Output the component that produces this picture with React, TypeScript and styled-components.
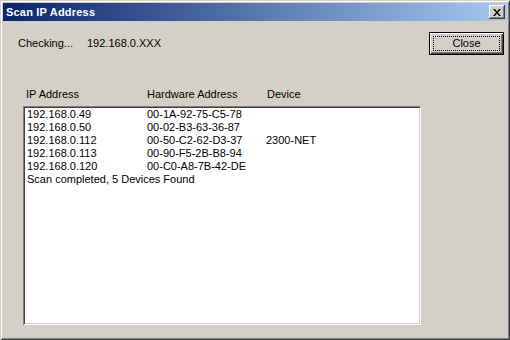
import * as React from "react";
import styled, { createGlobalStyle } from "styled-components";

const Global = createGlobalStyle`
	html, body {
		margin: 0;
		padding: 0;
		background: #d4d0c8;
	}
	body {
		font-family: "Liberation Sans", Arial, sans-serif;
		font-size: 11px;
		color: #000;
	}
`;

const Window = styled.div`
	width: 510px;
	height: 340px;
	box-sizing: border-box;
	padding: 3px;
	background: #d4d0c8;
	display: flex;
	flex-direction: column;
	box-shadow: inset 1px 1px #d4d0c8, inset -1px -1px #404040,
		inset 2px 2px #fff, inset -2px -2px #808080;
`;

const TitleBar = styled.div`
	height: 18px;
	display: flex;
	align-items: center;
	justify-content: space-between;
	padding: 0 2px 0 3px;
	background: linear-gradient(to right, #0a246a, #a6caf0);
	color: #fff;
	font-weight: bold;
	font-size: 11px;
	letter-spacing: 0.2px;
	flex-shrink: 0;
`;

const CaptionButton = styled.div`
	width: 16px;
	height: 14px;
	box-sizing: border-box;
	background: #d4d0c8;
	display: flex;
	align-items: center;
	justify-content: center;
	box-shadow: inset -1px -1px #404040, inset 1px 1px #fff,
		inset -2px -2px #808080;
`;

const Body = styled.div`
	flex: 1;
	display: flex;
	flex-direction: column;
	padding: 11px 3px 0 15px;
`;

const TopRow = styled.div`
	display: flex;
	align-items: center;
	height: 23px;
`;

const StatusLabel = styled.span<{ $width?: number }>`
	width: ${p => (p.$width ? `${p.$width}px` : "auto")};
	line-height: 13px;
`;

const Spacer = styled.div`
	flex: 1;
`;

const PushButton = styled.button`
	width: 75px;
	height: 23px;
	box-sizing: border-box;
	margin: 0;
	padding: 3px;
	background: #d4d0c8;
	border: 1px solid #000;
	font-family: inherit;
	font-size: 11px;
	color: #000;
	box-shadow: inset 1px 1px #fff, inset -1px -1px #404040,
		inset -2px -2px #808080;
	display: flex;
`;

const FocusRect = styled.span`
	flex: 1;
	border: 1px dotted #000;
	display: flex;
	align-items: center;
	justify-content: center;
	line-height: 13px;
`;

const ListHeader = styled.div`
	display: grid;
	grid-template-columns: 121px 120px auto;
	margin: 33px 0 0 8px;
	line-height: 13px;
`;

const ListBox = styled.div`
	width: 398px;
	height: 219px;
	box-sizing: border-box;
	margin: 5px 0 0 5px;
	padding: 2px 4px;
	background: #fff;
	box-shadow: inset 1px 1px #808080, inset -1px -1px #fff,
		inset 2px 2px #404040, inset -2px -2px #d4d0c8;
`;

const Row = styled.div`
	display: grid;
	grid-template-columns: 120px 119px auto;
	line-height: 13px;
	height: 13px;
`;

const Summary = styled.div`
	line-height: 13px;
	height: 13px;
`;

const devices = [
	{ ip: "192.168.0.49", mac: "00-1A-92-75-C5-78", name: "" },
	{ ip: "192.168.0.50", mac: "00-02-B3-63-36-87", name: "" },
	{ ip: "192.168.0.112", mac: "00-50-C2-62-D3-37", name: "2300-NET" },
	{ ip: "192.168.0.113", mac: "00-90-F5-2B-B8-94", name: "" },
	{ ip: "192.168.0.120", mac: "00-C0-A8-7B-42-DE", name: "" },
];

export default function App() {
	return (
		<>
			<Global />
			<Window>
				<TitleBar>
					<span>Scan IP Address</span>
					<CaptionButton>
						<svg width="8" height="7" viewBox="0 0 8 7">
							<path d="M0 0h2l2 2.5L6 0h2L5 3.5 8 7H6L4 4.5 2 7H0l3-3.5z" fill="#000" />
						</svg>
					</CaptionButton>
				</TitleBar>
				<Body>
					<TopRow>
						<StatusLabel $width={69}>Checking...</StatusLabel>
						<StatusLabel>192.168.0.XXX</StatusLabel>
						<Spacer />
						<PushButton>
							<FocusRect>Close</FocusRect>
						</PushButton>
					</TopRow>
					<ListHeader>
						<span>IP Address</span>
						<span>Hardware Address</span>
						<span>Device</span>
					</ListHeader>
					<ListBox>
						{devices.map(d => (
							<Row key={d.ip}>
								<span>{d.ip}</span>
								<span>{d.mac}</span>
								<span>{d.name}</span>
							</Row>
						))}
						<Summary>Scan completed, {devices.length} Devices Found</Summary>
					</ListBox>
				</Body>
			</Window>
		</>
	);
}
